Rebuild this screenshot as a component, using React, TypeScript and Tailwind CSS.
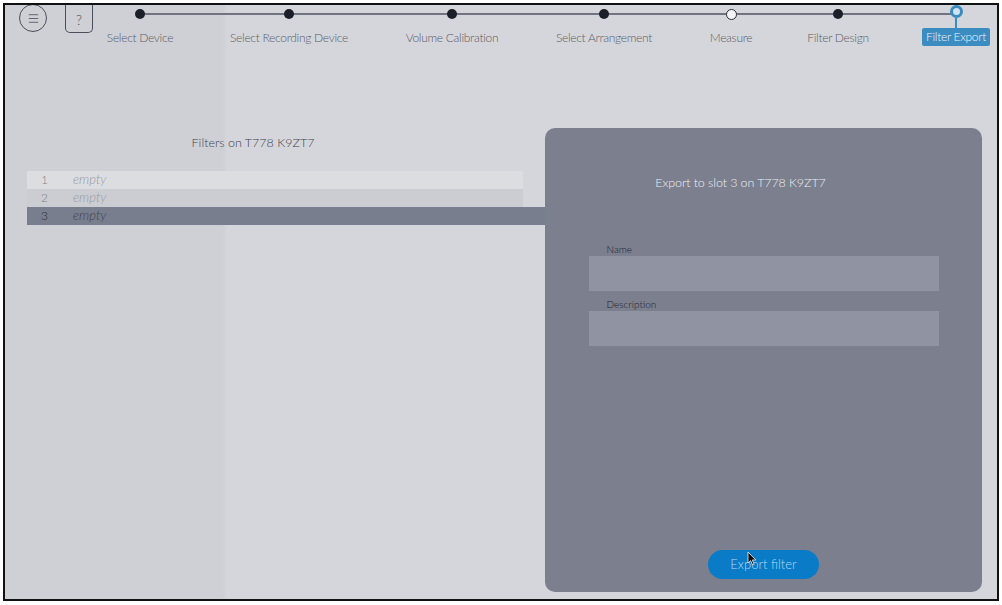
import { Menu } from "lucide-react";

type Step = { label: string; width: number; state: "done" | "open" | "active" };

const steps: Step[] = [
  { label: "Select Device", width: 80, state: "done" },
  { label: "Select Recording Device", width: 218, state: "done" },
  { label: "Volume Calibration", width: 108, state: "done" },
  { label: "Select Arrangement", width: 196, state: "done" },
  { label: "Measure", width: 58, state: "open" },
  { label: "Filter Design", width: 156, state: "done" },
  { label: "Filter Export", width: 80, state: "active" },
];

const slots = [
  { n: 1, name: "empty" },
  { n: 2, name: "empty" },
  { n: 3, name: "empty" },
];

function Stepper() {
  return (
    <div className="relative flex h-[48px]">
      {/* rail behind the dots */}
      <div className="absolute left-[40px] right-[40px] top-[8px] h-[2px] bg-[#707480]" />
      {steps.map((s) => (
        <div
          key={s.label}
          className="relative flex flex-col items-center shrink-0"
          style={{ width: s.width }}
        >
          {s.state === "done" && (
            <span className="mt-[4px] h-[10px] w-[10px] rounded-full bg-[#1c1f29]" />
          )}
          {s.state === "open" && (
            <span className="mt-[4px] h-[11px] w-[11px] rounded-full border border-[#2a2d36] bg-[#f4f4f6]" />
          )}
          {s.state === "active" ? (
            <>
              <span className="h-[13px] w-[13px] rounded-full border-[3px] border-[#3a8cc0] bg-[#cfe3f1]" />
              <span className="h-[10px] w-[2px] bg-[#3a8cc0]" />
              <span className="whitespace-nowrap rounded-[2px] bg-[#3b8cc0] px-[4px] py-[1px] text-[12px] font-light leading-[16px] tracking-[-0.3px] text-[#eef6fb]">
                {s.label}
              </span>
            </>
          ) : (
            <span
              className={
                s.state === "open"
                  ? "mt-[10px] whitespace-nowrap text-[12px] font-light leading-[16px] tracking-[-0.3px] text-[#5a5d68]"
                  : "mt-[11px] whitespace-nowrap text-[12px] font-light leading-[16px] tracking-[-0.3px] text-[#5a5d68]"
              }
            >
              {s.label}
            </span>
          )}
        </div>
      ))}
    </div>
  );
}

function SlotList() {
  return (
    <div className="flex flex-col pl-[22px]">
      {slots.map((s) => {
        const selected = s.n === 3;
        return (
          <div
            key={s.n}
            className={
              selected
                ? "flex h-[18px] w-[518px] items-center bg-[#797e8e]"
                : s.n === 1
                ? "flex h-[18px] w-[496px] items-center bg-[#dcdde1]"
                : "flex h-[18px] w-[496px] items-center bg-[#cccdd3]"
            }
          >
            <span
              className={
                selected
                  ? "w-[46px] pl-[14px] text-[12px] font-light text-[#262933]"
                  : "w-[46px] pl-[14px] text-[12px] font-light text-[#7f828b]"
              }
            >
              {s.n}
            </span>
            <span
              className={
                selected
                  ? "text-[13px] font-light italic text-[#3e414c]"
                  : "text-[13px] font-light italic text-[#979aa2]"
              }
            >
              {s.name}
            </span>
          </div>
        );
      })}
    </div>
  );
}

function Field({ label }: { label: string }) {
  return (
    <div className="flex flex-col">
      <span className="pl-[18px] text-[10px] font-light leading-[13px] text-[#20232e]">{label}</span>
      <div className="h-[35px] w-[350px] bg-[#8f93a2]" />
    </div>
  );
}

function ExportPanel() {
  return (
    <div className="relative flex h-[464px] w-[437px] flex-col items-center rounded-[10px] bg-[#7b7f8e]">
      <p className="mt-[46px] mr-[46px] text-[12.5px] font-light tracking-[-0.1px] text-[#eceef3]">
        Export to slot 3 on T778 K9ZT7
      </p>
      <div className="mt-[50px] flex flex-col gap-[7px]">
        <Field label="Name" />
        <Field label="Description" />
      </div>
      <button className="mt-auto mb-[13px] h-[29px] w-[111px] rounded-full bg-[#0a7bc7] text-[13px] font-light text-[#b3d8f3]">
        Export filter
      </button>
      {/* mouse pointer over the button */}
      <svg
        className="absolute left-[202px] top-[423px]"
        width="10"
        height="15"
        viewBox="0 0 10 15"
      >
        <path d="M1 1 L1 12 L3.6 9.6 L5.6 14 L7.2 13.3 L5.3 9 L8.8 9 Z" fill="#111" stroke="#eee" strokeWidth="0.8" />
      </svg>
    </div>
  );
}

export default function App() {
  return (
    <div
      className="h-[605px] w-[1002px] bg-white pl-[3px] pt-[3px]"
      style={{ fontFamily: "Lato, 'Open Sans', sans-serif" }}
    >
      <div className="flex h-[598px] w-[996px] flex-col overflow-hidden border-2 border-[#111] bg-[linear-gradient(90deg,#cfd0d6_0px,#cfd0d6_218px,#d5d6db_222px,#d5d6db_100%)]">
        {/* top bar */}
        <div className="flex">
          <div className="ml-[14px] -mt-[1px] flex h-[28px] w-[28px] shrink-0 items-center justify-center rounded-full border border-[#4b4e58]">
            <Menu className="h-[13px] w-[13px] text-[#4b4e58]" strokeWidth={1.5} />
          </div>
          <div className="ml-[18px] flex h-[28px] w-[28px] shrink-0 items-center justify-center rounded-b-[5px] border-x border-b border-[#4b4e58] pt-[1px] text-[14px] font-light text-[#4b4e58]">
            ?
          </div>
          <div className="ml-[7px]">
            <Stepper />
          </div>
        </div>

        {/* body */}
        <div className="flex flex-1">
          <div className="flex w-[540px] shrink-0 flex-col">
            <p className="mt-[81px] w-[496px] text-center text-[12.5px] font-light text-[#41444e]">
              Filters on T778 K9ZT7
            </p>
            <div className="mt-[18px]">
              <SlotList />
            </div>
          </div>
          <div className="mt-[75px]">
            <ExportPanel />
          </div>
        </div>
      </div>
    </div>
  );
}
